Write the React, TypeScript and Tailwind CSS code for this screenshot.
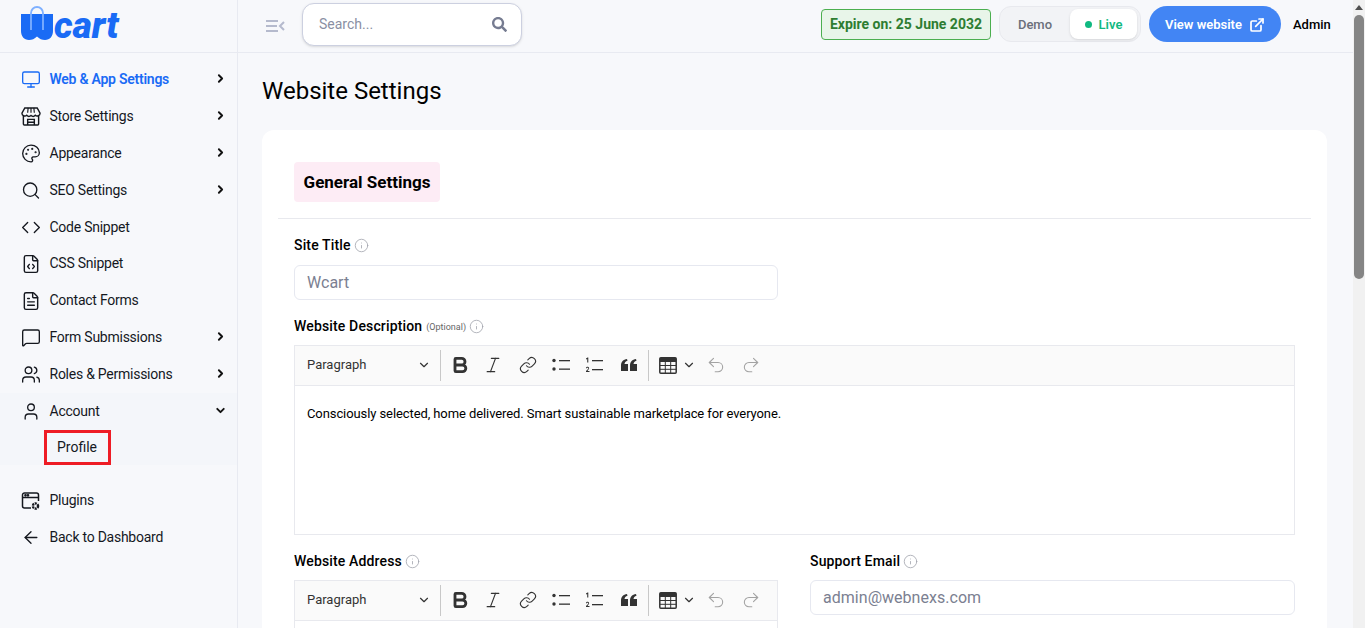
import React from 'react';
import {
  Monitor, Palette, Search, ChevronRight, ChevronDown, Code, FileCode, FileText,
  MessageSquare, Users, User, ArrowLeft, ExternalLink, Info, Undo2, Redo2, Bold, Italic, Link,
} from 'lucide-react';
import { FaSearch } from 'react-icons/fa';

const Logo = () => (
  <div className="flex items-end h-[34px]">
    <svg width="32" height="34" viewBox="0 0 32 34" className="mb-[3px]">
      <path d="M0 8h32v17c0 5-3 9-8 9-3 0-5.500-1-8-3.500C13.500 33 11 34 8 34c-5 0-8-4-8-9z" fill="#1a6bf5" />
      <path d="M10 24V7a6 6 0 0 1 12 0v17" fill="none" stroke="#7fb0ff" strokeWidth="1.800" />
    </svg>
    <span className="text-[37px] leading-[37px] font-black italic text-[#1a6bf5] ml-[1px] -mb-[1px]">cart</span>
  </div>
);

const StoreIcon = () => (
  <svg width="21" height="21" viewBox="0 0 21 21" fill="none" stroke="currentColor" strokeWidth="1.500">
    <path d="M2.500 10v8.500a1 1 0 0 0 1 1h14a1 1 0 0 0 1-1V10" />
    <path d="M4 1.500h13l3 5.500a3 3 0 0 1-5 2.200 3.200 3.200 0 0 1-4.500.3 3.200 3.200 0 0 1-4.500-.3A3 3 0 0 1 1 7z" />
    <path d="M7 6.500l.5-5M14 6.500l-.5-5M10.500 6.500v-5" strokeWidth="1.200" />
    <path d="M7 19.500v-6h7v6M7 16.500h7" />
  </svg>
);

const PluginIcon = () => (
  <svg width="21" height="20" viewBox="0 0 20 20" fill="none" stroke="currentColor" strokeWidth="1.500">
    <path d="M10 17H3.500A2 2 0 0 1 1.500 15V4A2 2 0 0 1 3.500 2h12a2 2 0 0 1 2 2v6" />
    <path d="M1.500 6.500h16" />
    <circle cx="4.500" cy="4.300" r=".6" fill="currentColor" />
    <circle cx="7" cy="4.300" r=".6" fill="currentColor" />
    <circle cx="14.500" cy="15" r="2.600" strokeWidth="2.400" strokeDasharray="2 .8" />
  </svg>
);

const items = [
  { icon: <Monitor size={21} strokeWidth={1.6} />, label: 'Web & App Settings', arrow: true, active: true, h: 'h-[37px]' },
  { icon: <StoreIcon />, label: 'Store Settings', arrow: true, h: 'h-[37px]' },
  { icon: <Palette size={21} strokeWidth={1.6} />, label: 'Appearance', arrow: true, h: 'h-[37px]' },
  { icon: <Search size={21} strokeWidth={1.6} />, label: 'SEO Settings', arrow: true, h: 'h-[37px]' },
  { icon: <Code size={21} strokeWidth={1.6} />, label: 'Code Snippet', h: 'h-[36px]' },
  { icon: <FileCode size={20} strokeWidth={1.7} />, label: 'CSS Snippet', h: 'h-[37px]' },
  { icon: <FileText size={20} strokeWidth={1.7} />, label: 'Contact Forms', h: 'h-[37px]' },
  { icon: <MessageSquare size={21} strokeWidth={1.6} />, label: 'Form Submissions', arrow: true, h: 'h-[37px]' },
  { icon: <Users size={21} strokeWidth={1.6} />, label: 'Roles & Permissions', arrow: true, h: 'h-[37px]' },
];

const Row = ({ icon, label, arrow, active, h }: { icon: React.ReactNode; label: string; arrow?: boolean; active?: boolean; h: string }) => (
  <div className={`flex items-center pl-[21px] pr-[10px] ${h} ${active ? 'text-[#1a6bf5]' : 'text-[#15181f]'}`}>
    <span className="w-[20px] flex justify-center">{icon}</span>
    <span className={`ml-[8.500px] text-[14px] tracking-[-0.25px] flex-1 ${active ? 'font-semibold' : ''}`}>{label}</span>
    {arrow && <ChevronRight size={13} strokeWidth={3.5} className="text-[#111] -mt-[3px]" />}
  </div>
);

const Sidebar = () => (
  <aside className="w-[238px] shrink-0 bg-[#f7f8fb] border-r border-[#e8eaf1] flex flex-col">
    <div className="h-[53px] border-b border-[#e8eaf1] pl-[21px] flex items-center">
      <Logo />
    </div>
    <nav className="pt-[8px]">
      {items.map((it) => <Row key={it.label} {...it} />)}
      <div className="bg-[#f4f6fa] h-[72px]">
        <div className="flex items-center pl-[21px] pr-[10px] h-[37px] text-[#15181f]">
          <span className="w-[20px] flex justify-center"><User size={21} strokeWidth={1.6} /></span>
          <span className="ml-[8.500px] text-[14px] tracking-[-0.25px] flex-1">Account</span>
          <ChevronDown size={13} strokeWidth={3.5} className="text-[#111] -mt-[3px]" />
        </div>
        <div className="ml-[44px] w-[67px] h-[35px] border-[3px] border-[#ee1c25] flex items-center justify-center pr-[1px] text-[14px] text-[#15181f]">Profile</div>
      </div>
      <div className="h-[17px]" />
      <Row icon={<PluginIcon />} label="Plugins" h="h-[37px]" />
      <Row icon={<ArrowLeft size={21} strokeWidth={1.6} />} label="Back to Dashboard" h="h-[37px]" />
    </nav>
  </aside>
);

const Header = () => (
  <header className="h-[53px] border-b border-[#e8eaf1] flex items-center pl-[28px] pr-[22px] shrink-0">
    <svg width="19" height="14" viewBox="0 0 19 14" fill="none" stroke="#b5bacd" strokeWidth="2">
      <path d="M0 2h12M0 7h11M0 12h12M18 3l-4 4 4 4" />
    </svg>
    <div className="ml-[17px] w-[220px] h-[43px] -mt-[3px] bg-white border border-[#ccd0e0] rounded-xl shadow-sm flex items-center pl-[16px] pr-[14px]">
      <span className="flex-1 text-[14px] text-[#8a8fa3]">Search...</span>
      <FaSearch size={15} className="text-[#767c91] -mt-[1px]" />
    </div>
    <div className="ml-auto h-[31px] w-[170px] -mt-[4px] border border-[#4caf50] bg-[#e8f5e9] rounded-[4px] flex items-center justify-center text-[14px] font-bold text-[#2e7d32]">Expire on: 25 June 2032</div>
    <div className="ml-[8px] w-[142px] h-[36px] -mt-[4px] bg-[#f2f3f6] border border-[#e8e9ee] rounded-xl flex items-center p-[3px]">
      <span className="w-[67px] pr-[3px] pt-[1px] text-center text-[13px] font-medium text-[#6b6f7b]">Demo</span>
      <span className="flex-1 h-[30px] pt-[1px] bg-white rounded-lg shadow-sm flex items-center justify-center text-[13px] font-semibold text-[#10b981]">
        <span className="w-[7px] h-[7px] rounded-full bg-[#10b981] mr-[7px]" />Live
      </span>
    </div>
    <div className="ml-[8px] w-[132px] h-[36px] -mt-[4px] pt-[1px] bg-[#4285f4] rounded-full flex items-center justify-center gap-[7px] text-white text-[13px] font-semibold">
      View website <ExternalLink size={16} strokeWidth={2.6} />
    </div>
    <span className="ml-[12px] w-[38px] -mt-[2px] text-[13px] font-medium text-black">Admin</span>
  </header>
);

const Tip = () => <Info size={15} strokeWidth={1.25} className="text-[#9fa2aa]" />;

const Toolbar = () => (
  <div className="h-[40px] pb-[1px] bg-[#fafafa] border-b border-[#e8e9ee] flex items-center text-[#333]">
    <span className="w-[112px] pl-[12px] text-[13px] text-[#333]">Paragraph</span>
    <ChevronDown size={14} strokeWidth={2} className="ml-[10px]" />
    <span className="w-px h-[31px] bg-[#c8c8c8] ml-[9px]" />
    <Bold size={20} strokeWidth={3.4} className="ml-[9px]" />
    <Italic size={20} strokeWidth={1.4} className="ml-[13px]" />
    <Link size={18} strokeWidth={1.5} className="ml-[16px]" />
    <svg width="19" height="14" viewBox="0 0 19 14" className="ml-[15px]" fill="#333">
      <circle cx="2" cy="2.500" r="1.700" /><circle cx="2" cy="11" r="1.700" />
      <rect x="7" y="2" width="11" height="1.300" /><rect x="7" y="10.500" width="11" height="1.300" />
    </svg>
    <svg width="19" height="16" viewBox="0 0 19 16" className="ml-[14px]" fill="#333">
      <path d="M1 1.500L2.500.5h.8v5H2.200V2L1 2.500z" />
      <path d="M1 15v-1l2-2c.6-.7.2-1.500-.6-1.300-.4.100-.7.400-.8.700l-.7-.400C1.200 10 2 9.600 2.700 9.700 4.100 9.800 4.600 11.200 3.700 12.300L2.500 14H4.500v1z" />
      <rect x="7" y="3" width="11" height="1.300" /><rect x="7" y="12" width="11" height="1.300" />
    </svg>
    <svg width="16" height="12" viewBox="0 0 16 12" className="ml-[17px]" fill="#333">
      <path d="M0 12V6.500C0 2.800 2.300.6 6 0l.5 1.800C4.600 2.400 3.700 3.600 3.500 5H7v7z" />
      <path d="M9 12V6.500C9 2.800 11.300.6 15 0l.5 1.800C13.600 2.400 12.700 3.600 12.500 5H16v7z" />
    </svg>
    <span className="w-px h-[31px] bg-[#c8c8c8] ml-[11px]" />
    <svg width="18" height="17" viewBox="0 0 18 17" className="ml-[10px]">
      <rect x=".8" y=".8" width="16.400" height="15.400" rx="1" fill="none" stroke="#333" strokeWidth="1.500" />
      <rect x="1" y="1" width="16" height="4" fill="#333" />
      <path d="M1 8.500h16M1 12.300h16M6.300 5v11M11.700 5v11" stroke="#333" strokeWidth="1" />
    </svg>
    <ChevronDown size={14} strokeWidth={2} className="ml-[5px]" />
    <Undo2 size={20} strokeWidth={1.3} className="ml-[10px] text-[#a3a3a3]" />
    <Redo2 size={20} strokeWidth={1.3} className="ml-[15px] text-[#a3a3a3]" />
  </div>
);

const Label = ({ children }: { children: React.ReactNode }) => (
  <div className="flex items-center gap-[3px] text-[14px] tracking-[.15px] font-medium text-black h-[20px]">{children}<Tip /></div>
);

const Input = ({ value, className }: { value: string; className: string }) => (
  <div className={`h-[35px] border border-[#e6e8f0] rounded-[6px] flex items-center pl-[12px] text-[16px] text-[#7b8091] bg-white tracking-[.03px] ${className}`}>{value}</div>
);

const Main = () => (
  <div className="flex-1 min-w-0 flex flex-col bg-[#f7f8fb]">
    <Header />
    <main className="pl-[24px] pr-[26px] overflow-hidden">
      <h1 className="text-[24px] leading-[28px] mt-[24px] text-black">Website Settings</h1>
      <section className="mt-[25px] bg-white rounded-t-[12px] px-[16px] pt-[32px] h-[600px]">
        <h2 className="ml-[16px] w-[146px] h-[40px] pt-[1px] bg-[#fdecf5] rounded-[4px] flex items-center justify-center text-[17px] font-bold text-black">General Settings</h2>
        <div className="border-t border-[#e8e9ee] mt-[16px]" />
        <div className="px-[16px] pt-[16px]">
          <Label>Site Title</Label>
          <Input value="Wcart" className="mt-[10px] w-[484px]" />
          <div className="mt-[16px]">
            <Label>Website Description <span className="text-[9px] font-normal text-[#666] tracking-normal ml-[1px] pt-[3px]">(Optional)</span></Label>
          </div>
          <div className="mt-[9px] h-[190px] border border-[#e8e9ee]">
            <Toolbar />
            <p className="px-[12px] pt-[20px] text-[13px] leading-[16px] tracking-[-0.09px] text-black">Consciously selected, home delivered. Smart sustainable marketplace for everyone.</p>
          </div>
          <div className="grid grid-cols-[484px_1fr] gap-[32px] mt-[16px]">
            <div>
              <Label>Website Address</Label>
              <div className="mt-[9px] h-[190px] border border-[#e8e9ee]"><Toolbar /></div>
            </div>
            <div>
              <Label>Support Email</Label>
              <Input value="admin@webnexs.com" className="mt-[9px]" />
            </div>
          </div>
        </div>
      </section>
    </main>
  </div>
);

const Scrollbar = () => (
  <div className="w-[12px] shrink-0 bg-[#f1f1f1] flex flex-col items-center">
    <div className="h-[15px] flex items-center justify-center">
      <span className="w-0 h-0 border-x-[4px] border-x-transparent border-b-[5px] border-b-[#505050]" />
    </div>
    <div className="w-[10px] h-[264px] bg-[#858585] rounded-[5px]" />
  </div>
);

export default function App() {
  return (
    <div className="h-[628px] flex overflow-hidden font-['Roboto',sans-serif]">
      <Sidebar />
      <Main />
      <Scrollbar />
    </div>
  );
}
